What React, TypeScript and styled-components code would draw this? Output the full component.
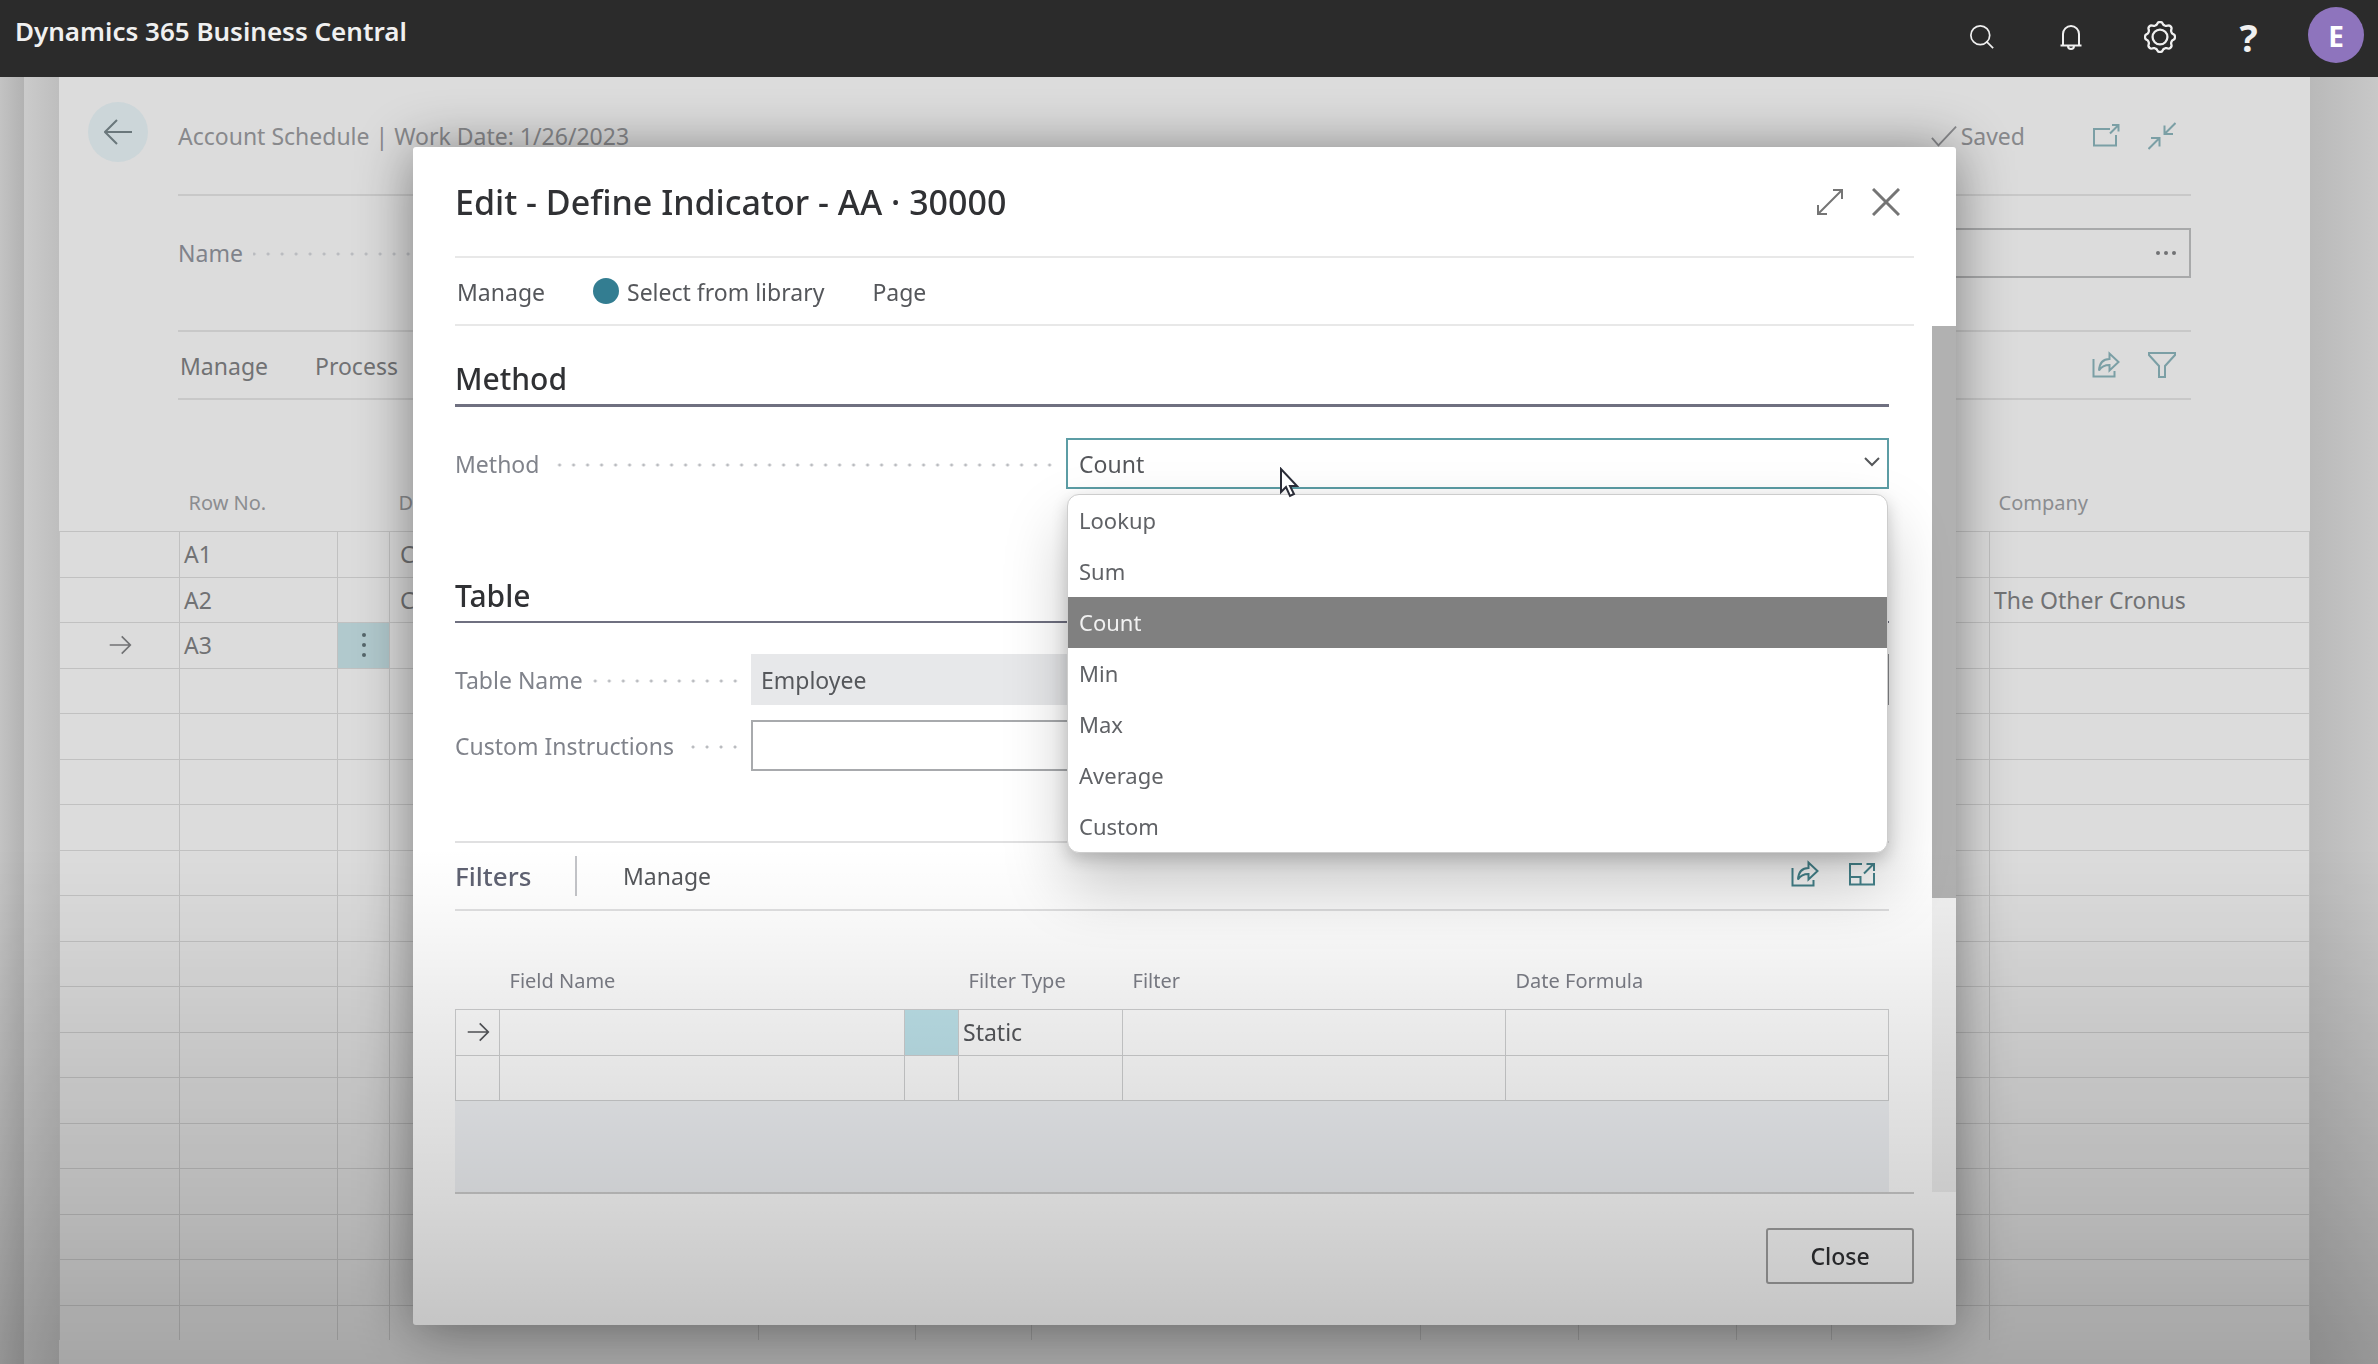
import React from "react";
import styled, { createGlobalStyle, css } from "styled-components";

const FONT = '"Noto Sans", "Open Sans", sans-serif';
const teal = "#46868f";
const mutedTeal = "#7b9fa5";

const GlobalStyle = createGlobalStyle`
  *, *::before, *::after { box-sizing: border-box; }
  html, body { margin: 0; height: 100%; }
  body {
    font-family: ${FONT};
    font-size: 23px;
    line-height: 32px;
    color: #55575b;
    overflow: hidden;
  }
  button, input, select { font: inherit; color: inherit; }
  h1, h2, ul { margin: 0; padding: 0; font-weight: 400; }
`;

/* ---------- shell ---------- */

const Shell = styled.div`
  display: flex;
  flex-direction: column;
  height: 100vh;
  overflow: hidden;
  background: #c4c4c4;
`;

const TopBar = styled.header`
  display: flex;
  align-items: flex-start;
  justify-content: space-between;
  flex: none;
  height: 77px;
  padding: 7px 14px 0 15px;
  background: #2b2b2b;
  color: #f0f0f0;
`;

const Brand = styled.h1`
  font-size: 26px;
  line-height: 48px;
  font-weight: 600;
`;

const TopActions = styled.nav`
  display: flex;
  gap: 33px;
`;

const plainButton = css`
  display: inline-flex;
  align-items: center;
  justify-content: center;
  padding: 0;
  border: 0;
  background: none;
`;

const TopButton = styled.button`
  ${plainButton}
  width: 56px;
  height: 56px;
  padding: 3px 0 0 3px;
`;

const HelpButton = styled(TopButton)`
  font-size: 38px;
  font-weight: 700;
`;

const Avatar = styled(TopButton)`
  padding: 2px 0 0;
  border-radius: 50%;
  background: #8e74bd;
  color: #fff;
  font-size: 28px;
  font-weight: 700;
`;

const Stage = styled.div`
  display: flex;
  flex: 1;
  min-height: 0;
  padding-left: 24px;
  background: linear-gradient(90deg, #c3c3c3, #b2b2b2 24px, #b2b2b2 50%, #b9b9b9 calc(100% - 68px), #c8c8c8);
`;

const BackSheet = styled.div`
  display: flex;
  flex: 1;
  min-width: 0;
  padding: 0 68px 0 35px;
  background: linear-gradient(90deg, #cbcbcb, #bebebe 35px, #bebebe 50%, #b9b9b9 calc(100% - 68px), #c8c8c8);
`;

const Sheet = styled.main`
  flex: 1;
  min-width: 0;
  overflow: hidden;
  background: #dcdcdc;
  color: #717274;
`;

/* ---------- page behind the dialog ---------- */

const SheetTop = styled.div`
  display: flex;
  gap: 30px;
  padding: 0 119px 0 29px;
`;

const BackButton = styled.button`
  ${plainButton}
  flex: none;
  width: 60px;
  height: 60px;
  margin-top: 25px;
  border-radius: 50%;
  background: #ccd6d9;
  color: #6a777b;
`;

const SheetTitle = styled.div`
  display: flex;
  flex: 1;
  align-items: center;
  justify-content: space-between;
  height: 119px;
  padding-right: 15px;
  border-bottom: 2px solid #c8c8c8;
  color: #88898c;
`;

const IconGroup = styled.div<{ $tone?: string }>`
  display: flex;
  align-items: center;
  gap: 28px;
  color: ${(p) => p.$tone ?? teal};
`;

const IconButton = styled.button`
  ${plainButton}
  width: 28px;
  height: 28px;
`;

const Saved = styled.span`
  display: flex;
  align-items: center;
  gap: 4px;
  margin-right: 39px;
  color: #88898c;
`;

const SheetBody = styled.div`
  margin: 0 119px;
`;

const NameRow = styled.div`
  display: flex;
  align-items: center;
  padding: 32px 0 52px;
`;

const Leader = styled.span`
  flex: 1;
  height: 4px;
  margin: 2px 9px 0 10px;
  background: radial-gradient(circle, #b9bbbf 1px, transparent 2px) right center / 14px 4px repeat-x;
`;

const LabelCell = styled.div<{ $width: number }>`
  display: flex;
  align-items: center;
  flex: none;
  width: ${(p) => p.$width}px;
  color: #80838b;
`;

const NameField = styled.div`
  display: flex;
  align-items: center;
  flex: 1;
  height: 50px;
  padding-right: 9px;
  border: 2px solid #a8a9aa;
`;

const NameInput = styled.input`
  flex: 1;
  min-width: 0;
  border: 0;
  background: none;
`;

const SheetToolbar = styled.div`
  display: flex;
  align-items: center;
  justify-content: space-between;
  height: 70px;
  padding: 0 15px 0 2px;
  border: solid #c8c8c8;
  border-width: 2px 0;
`;

const Menu = styled.div<{ $gap: number }>`
  display: flex;
  align-items: center;
  gap: ${(p) => p.$gap}px;
  padding-top: 2px;
`;

const MenuButton = styled.button`
  ${plainButton}
  gap: 8px;
`;

const grid = css`
  width: 100%;
  table-layout: fixed;
  border-collapse: collapse;
  th {
    padding: 0 0 14px 9px;
    vertical-align: bottom;
    text-align: left;
    font-size: 20px;
    line-height: 28px;
    font-weight: 400;
    white-space: nowrap;
  }
  td {
    padding: 0 0 0 4px;
    white-space: nowrap;
  }
  tbody tr { height: 46px; }
  tbody tr:nth-child(even) { height: 45px; }
`;

const ScheduleGrid = styled.table`
  ${grid}
  thead tr { height: 131px; }
  th { color: #8b8d90; }
  td { border: 1px solid #c1c1c1; }
  tbody tr:last-child { height: 35px; }
  tbody tr:last-child td { border-bottom: 0; }
`;

const ArrowCell = styled.td`
  && { padding: 0; text-align: center; }
  svg { display: block; margin: 0 auto; }
`;

const MarkCell = styled.td<{ $tone: string }>`
  && { padding: 0; background: ${(p) => p.$tone}; }
  svg { display: block; margin: 0 auto; }
`;

/* ---------- dialog ---------- */

const Shade = styled.div`
  position: fixed;
  inset: 77px 0 0;
  pointer-events: none;
  background: linear-gradient(
    180deg,
    transparent 770px,
    rgba(0, 0, 0, 0.02) 823px,
    rgba(0, 0, 0, 0.075) 933px,
    rgba(0, 0, 0, 0.16) 1123px,
    rgba(0, 0, 0, 0.22) 1233px,
    rgba(0, 0, 0, 0.245) 100%
  );
`;

const Backdrop = styled.div`
  position: fixed;
  inset: 77px 0 0;
  display: flex;
  padding: 70px 422px 39px 413px;
`;

const Dialog = styled.section`
  display: flex;
  flex-direction: column;
  flex: 1;
  min-width: 0;
  border-radius: 3px;
  background: #fff;
  box-shadow: 0 4px 56px rgba(0, 0, 0, 0.44);
`;

const DialogHeader = styled.header`
  display: flex;
  align-items: center;
  justify-content: space-between;
  flex: none;
  height: 111px;
  margin: 0 42px;
  padding-right: 14px;
  border-bottom: 2px solid #e8e8e8;
`;

const DialogTitle = styled.h2`
  font-size: 34px;
  line-height: 44px;
  font-weight: 500;
  color: #303134;
`;

const DialogToolbar = styled.div`
  display: flex;
  align-items: center;
  flex: none;
  height: 68px;
  margin: 0 42px;
  padding-left: 2px;
  border-bottom: 2px solid #e8e8e8;
`;

const Dot = styled.span`
  width: 26px;
  height: 26px;
  margin-bottom: 2px;
  border-radius: 50%;
  background: #337d91;
`;

const DialogBody = styled.div`
  display: flex;
  flex: 1;
  min-height: 0;
`;

const Content = styled.div`
  display: flex;
  flex-direction: column;
  flex: 1;
  min-width: 0;
  padding: 0 43px 0 42px;
`;

const ScrollTrack = styled.div`
  flex: none;
  width: 24px;
  background: #f0f0f0;
`;

const ScrollThumb = styled.div`
  height: 66%;
  background: #b1b1b1;
`;

const SectionTitle = styled.h2<{ $space: number; $rule: number }>`
  margin-top: ${(p) => p.$space}px;
  margin-bottom: 31px;
  padding-bottom: 5px;
  border-bottom: ${(p) => p.$rule}px solid #6f7080;
  font-size: 30px;
  line-height: 40px;
  font-weight: 500;
  color: #303134;
`;

const FieldRow = styled.div`
  display: flex;
  align-items: center;
  & + & { margin-top: 15px; }
`;

const SelectWrap = styled.div`
  position: relative;
  flex: 1;
`;

const Select = styled.select`
  display: block;
  width: 100%;
  height: 51px;
  padding: 0 11px;
  border: 2px solid #5c9da5;
  border-radius: 0;
  outline: 0;
  background: #fff;
  appearance: none;
`;

const Chevron = styled.svg`
  position: absolute;
  right: 9px;
  top: 16px;
  pointer-events: none;
`;

const Options = styled.ul`
  position: absolute;
  z-index: 1;
  top: 56px;
  left: 1px;
  right: 1px;
  overflow: hidden;
  border: 1px solid #cdcdcd;
  border-radius: 12px;
  background: #fff;
  box-shadow: 0 6px 16px rgba(0, 0, 0, 0.18), 0 32px 64px rgba(0, 0, 0, 0.22);
  font-size: 22px;
  list-style: none;
`;

const Option = styled.li<{ $active: boolean }>`
  padding: 0 11px;
  line-height: 51px;
  background: ${(p) => (p.$active ? "#808080" : "transparent")};
  color: ${(p) => (p.$active ? "#f1f1f1" : "#606266")};
`;

const Pointer = styled.svg`
  position: absolute;
  z-index: 2;
  left: 213px;
  top: 29px;
`;

const ReadOnlyInput = styled.input`
  flex: 1;
  min-width: 0;
  height: 51px;
  padding: 0 10px;
  border: 0;
  border-right: 1px solid #8d8f92;
  background: #e7e8ea;
`;

const TextInput = styled.input`
  width: 420px;
  height: 51px;
  border: 2px solid #a8aaad;
  background: #fff;
`;

const FilterBar = styled.div`
  display: flex;
  align-items: center;
  flex: none;
  height: 70px;
  margin-top: 70px;
  padding-right: 14px;
  border: solid #e0e0e1;
  border-width: 2px 0;
`;

const FilterTitle = styled.h2`
  width: 122px;
  margin-right: 46px;
  border-right: 2px solid #c3c4c8;
  font-size: 26px;
  line-height: 40px;
  font-weight: 500;
  color: #5f6272;
`;

const Spacer = styled.div`
  flex: 1;
`;

const FilterActions = styled(IconGroup)`
  padding-bottom: 4px;
`;

const FilterGrid = styled.table`
  ${grid}
  thead tr { height: 98px; }
  th { padding-left: 10px; color: #7d7f88; }
  td { border: 1px solid #d0d1d2; }
`;

const EmptyArea = styled.div`
  flex: 1;
  background: #f1f3f6;
`;

const DialogFooter = styled.footer`
  display: flex;
  flex: none;
  justify-content: flex-end;
  align-items: flex-start;
  height: 133px;
  margin: 0 42px;
  padding-top: 34px;
  border-top: 2px solid #cfcfcf;
`;

const CloseButton = styled.button`
  width: 148px;
  height: 56px;
  border: 2px solid #a3a3a3;
  border-radius: 3px;
  background: transparent;
  font-weight: 500;
  color: #303134;
`;

/* ---------- icons ---------- */

type IconProps = { size?: number; width?: number; children: React.ReactNode };

const Icon = ({ size = 28, width = 2, children }: IconProps) => (
  <svg width={size} height={size} viewBox="0 0 28 28" fill="none" stroke="currentColor" strokeWidth={width} aria-hidden="true">
    {children}
  </svg>
);

const ShareIcon = () => (
  <Icon>
    <path d="M1.500 8v17.500h21V20" />
    <path d="M7 19.500C7.500 12 11.500 8 17.500 8V2.500l9 8.500-9 8.500V14C12.500 14 9.500 15.500 7 19.500z" />
  </Icon>
);

const PopOutIcon = () => (
  <Icon>
    <path d="M18 7H2v16.500h22V13" />
    <path d="M18 11.500l8-8M20 3h6.500v6.500" />
  </Icon>
);

const CollapseIcon = () => (
  <Icon>
    <path d="M27.500 1L17 11.500M16.500 3.500V12H25M.5 27L11 16.500M3 16h8.500v8.500" />
  </Icon>
);

const FilterIcon = () => (
  <Icon>
    <path d="M1 2h26v2L17 15v11h-6V15L1 4z" />
  </Icon>
);

const EnlargeIcon = () => (
  <Icon>
    <path d="M15 4H3v20.500h24V13" />
    <path d="M3 17h10.500v7.500M17 13.500L26 4.500M19.500 4H27v7" />
  </Icon>
);

const RightArrow = () => (
  <Icon size={24}>
    <path d="M2 14h23M16 4l10 10-10 10" />
  </Icon>
);

const gearPath = (() => {
  const points: string[] = [];
  for (let i = 0; i <= 96; i += 1) {
    const a = (i / 96) * Math.PI * 2;
    const r = 12 + 1.2 * Math.tanh(1.6 * Math.cos(a * 8));
    points.push(`${(14 + r * Math.sin(a)).toFixed(2)} ${(14 - r * Math.cos(a)).toFixed(2)}`);
  }
  return `M${points.join("L")}z`;
})();

/* ---------- data ---------- */

const methods = ["Lookup", "Sum", "Count", "Min", "Max", "Average", "Custom"];
const scheduleColumns = [120, 158, 52, 369, 157, 116, 389, 158, 158, 95, 158];
const scheduleRows = [
  { no: "A1", text: "C", company: "" },
  { no: "A2", text: "C", company: "The Other Cronus" },
  { no: "A3", text: "", company: "" },
  ...Array.from({ length: 15 }, () => ({ no: "", text: "", company: "" })),
];
const filterColumns = [44, 405, 54, 164];

const Schedule = () => (
  <ScheduleGrid>
    <colgroup>
      {scheduleColumns.map((w, i) => (
        <col key={i} width={w} />
      ))}
      <col />
    </colgroup>
    <thead>
      <tr>
        <th />
        <th>Row No.</th>
        <th />
        <th>D</th>
        <th colSpan={7} />
        <th>Company</th>
      </tr>
    </thead>
    <tbody>
      {scheduleRows.map((row, i) => {
        const current = row.no === "A3";
        return (
          <tr key={i}>
            <ArrowCell>{current && <RightArrow />}</ArrowCell>
            <td>{row.no}</td>
            <MarkCell $tone={current ? "#b1c9cd" : "transparent"}>
              {current && (
                <svg width="6" height="28" viewBox="0 0 6 28" fill="#55666a" aria-hidden="true">
                  <circle cx="3" cy="4" r="2" />
                  <circle cx="3" cy="14" r="2" />
                  <circle cx="3" cy="24" r="2" />
                </svg>
              )}
            </MarkCell>
            <td>&nbsp;{row.text}</td>
            {Array.from({ length: 7 }, (_, c) => (
              <td key={c} />
            ))}
            <td>{row.company}</td>
          </tr>
        );
      })}
    </tbody>
  </ScheduleGrid>
);

const Filters = () => (
  <FilterGrid>
    <colgroup>
      {filterColumns.map((w, i) => (
        <col key={i} width={w} />
      ))}
      <col />
      <col />
    </colgroup>
    <thead>
      <tr>
        <th />
        <th>Field Name</th>
        <th />
        <th>Filter Type</th>
        <th>Filter</th>
        <th>Date Formula</th>
      </tr>
    </thead>
    <tbody>
      <tr>
        <ArrowCell>
          <RightArrow />
        </ArrowCell>
        <td />
        <MarkCell $tone="#bfe4ec" />
        <td>Static</td>
        <td />
        <td />
      </tr>
      <tr>
        <td />
        <td />
        <td />
        <td />
        <td />
        <td />
      </tr>
    </tbody>
  </FilterGrid>
);

export default function App() {
  const [method, setMethod] = React.useState("Count");

  return (
    <Shell>
      <GlobalStyle />
      <TopBar>
        <Brand>Dynamics 365 Business Central</Brand>
        <TopActions>
          <TopButton aria-label="Search">
            <Icon size={24}>
              <circle cx="12" cy="12" r="11" />
              <path d="M19 19l8 8" />
            </Icon>
          </TopButton>
          <TopButton aria-label="Notifications">
            <Icon size={28}>
              <path d="M3.500 22.500h21M6 22.500V11a8 8 0 0 1 16 0v11.500M11 23a3 3 0 0 0 6 0" />
            </Icon>
          </TopButton>
          <TopButton aria-label="Settings">
            <Icon size={32}>
              <path d={gearPath} />
              <circle cx="14" cy="14" r="6.500" />
            </Icon>
          </TopButton>
          <HelpButton aria-label="Help">?</HelpButton>
          <Avatar aria-label="Account">E</Avatar>
        </TopActions>
      </TopBar>

      <Stage>
        <BackSheet>
          <Sheet>
            <SheetTop>
              <BackButton aria-label="Back">
                <Icon>
                  <path d="M28 14H1M13 2L1 14l12 12" />
                </Icon>
              </BackButton>
              <SheetTitle>
                <span>Account Schedule | Work Date: 1/26/2023</span>
                <IconGroup $tone={mutedTeal}>
                  <Saved>
                    <Icon size={26}>
                      <path d="M1 16l7 8L27 4" />
                    </Icon>
                    Saved
                  </Saved>
                  <IconButton aria-label="Open in new window">
                    <PopOutIcon />
                  </IconButton>
                  <IconButton aria-label="Collapse">
                    <CollapseIcon />
                  </IconButton>
                </IconGroup>
              </SheetTitle>
            </SheetTop>
            <SheetBody>
              <NameRow>
                <LabelCell $width={400}>
                  <label htmlFor="schedule-name">Name</label>
                  <Leader />
                </LabelCell>
                <NameField>
                  <NameInput id="schedule-name" />
                  <IconButton aria-label="Look up name">
                    <svg width="20" height="4" viewBox="0 0 20 4" fill="currentColor" aria-hidden="true">
                      <circle cx="2" cy="2" r="2" />
                      <circle cx="10" cy="2" r="2" />
                      <circle cx="18" cy="2" r="2" />
                    </svg>
                  </IconButton>
                </NameField>
              </NameRow>
              <SheetToolbar>
                <Menu $gap={47}>
                  <MenuButton>Manage</MenuButton>
                  <MenuButton>Process</MenuButton>
                </Menu>
                <IconGroup $tone={mutedTeal}>
                  <IconButton aria-label="Share">
                    <ShareIcon />
                  </IconButton>
                  <IconButton aria-label="Filter">
                    <FilterIcon />
                  </IconButton>
                </IconGroup>
              </SheetToolbar>
            </SheetBody>
            <Schedule />
          </Sheet>
        </BackSheet>
      </Stage>

      <Backdrop>
        <Dialog role="dialog" aria-labelledby="dialog-title">
          <DialogHeader>
            <DialogTitle id="dialog-title">Edit - Define Indicator - AA · 30000</DialogTitle>
            <IconGroup $tone="#757575">
              <IconButton aria-label="Expand">
                <Icon>
                  <path d="M2 26L26 2M17 2h9v9M2 17v9h9" />
                </Icon>
              </IconButton>
              <IconButton aria-label="Close dialog">
                <Icon width={3}>
                  <path d="M1 1l26 26M27 1L1 27" />
                </Icon>
              </IconButton>
            </IconGroup>
          </DialogHeader>
          <DialogToolbar>
            <Menu $gap={48}>
              <MenuButton>Manage</MenuButton>
              <MenuButton>
                <Dot />
                Select from library
              </MenuButton>
              <MenuButton>Page</MenuButton>
            </Menu>
          </DialogToolbar>

          <DialogBody>
            <Content>
              <SectionTitle $space={33} $rule={3}>
                Method
              </SectionTitle>
              <FieldRow>
                <LabelCell $width={611}>
                  <label htmlFor="method">Method</label>
                  <Leader />
                </LabelCell>
                <SelectWrap>
                  <Select id="method" value={method} onChange={(e) => setMethod(e.target.value)}>
                    {methods.map((m) => (
                      <option key={m}>{m}</option>
                    ))}
                  </Select>
                  <Chevron width="16" height="16" viewBox="0 0 16 16" fill="none" stroke="#55575a" strokeWidth="2" aria-hidden="true">
                    <path d="M1 4l7 7 7-7" />
                  </Chevron>
                  <Options role="listbox" aria-label="Method options">
                    {methods.map((m) => (
                      <Option key={m} role="option" aria-selected={m === method} $active={m === method} onClick={() => setMethod(m)}>
                        {m}
                      </Option>
                    ))}
                  </Options>
                  <Pointer width="22" height="32" viewBox="0 0 22 32" aria-hidden="true">
                    <path d="M2 2v23l5-5 4 9 4-2-4-8h7z" fill="#fff" stroke="#2b2d38" strokeWidth="2" />
                  </Pointer>
                </SelectWrap>
              </FieldRow>

              <SectionTitle $space={87} $rule={2}>
                Table
              </SectionTitle>
              <FieldRow>
                <LabelCell $width={296}>
                  <label htmlFor="table-name">Table Name</label>
                  <Leader />
                </LabelCell>
                <ReadOnlyInput id="table-name" value="Employee" readOnly />
              </FieldRow>
              <FieldRow>
                <LabelCell $width={296}>
                  <label htmlFor="custom-instructions">Custom Instructions</label>
                  <Leader />
                </LabelCell>
                <TextInput id="custom-instructions" />
              </FieldRow>

              <FilterBar>
                <FilterTitle>Filters</FilterTitle>
                <MenuButton>Manage</MenuButton>
                <Spacer />
                <FilterActions>
                  <IconButton aria-label="Share filters">
                    <ShareIcon />
                  </IconButton>
                  <IconButton aria-label="Enlarge filters">
                    <EnlargeIcon />
                  </IconButton>
                </FilterActions>
              </FilterBar>
              <Filters />
              <EmptyArea />
            </Content>
            <ScrollTrack>
              <ScrollThumb />
            </ScrollTrack>
          </DialogBody>

          <DialogFooter>
            <CloseButton>Close</CloseButton>
          </DialogFooter>
        </Dialog>
      </Backdrop>
      <Shade />
    </Shell>
  );
}
